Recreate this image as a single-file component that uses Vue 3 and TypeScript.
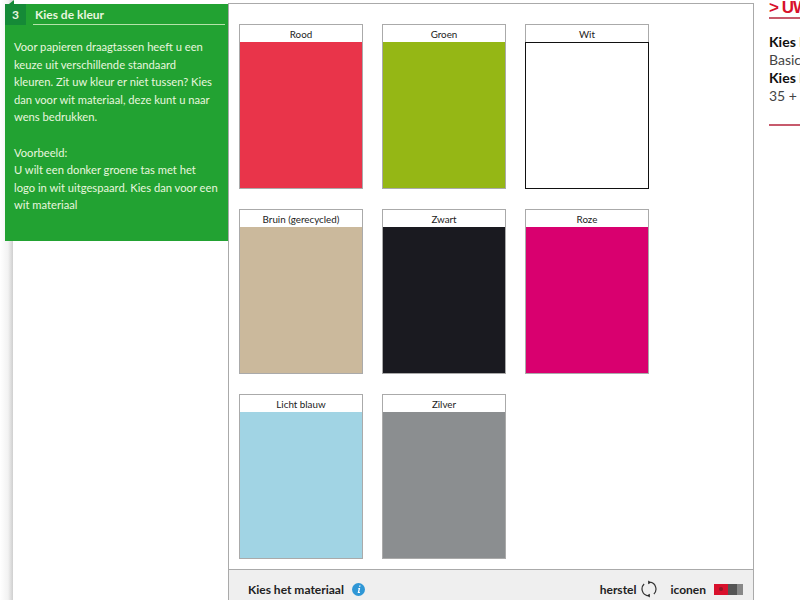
<script setup lang="ts">
interface Swatch {
  name: string
  color: string
}

const swatches: Swatch[] = [
  { name: 'Rood', color: '#e9344a' },
  { name: 'Groen', color: '#95b715' },
  { name: 'Wit', color: '#ffffff' },
  { name: 'Bruin (gerecycled)', color: '#cbb99c' },
  { name: 'Zwart', color: '#1a1a20' },
  { name: 'Roze', color: '#d9006f' },
  { name: 'Licht blauw', color: '#a1d4e4' },
  { name: 'Zilver', color: '#8b8e90' },
]
</script>

<template>
  <div class="page">
    <aside class="left">
      <div class="step">
        <div class="step-head">
          <span class="step-num">3</span>
          <span class="step-title">Kies de kleur</span>
        </div>
        <p class="step-text">
          Voor papieren draagtassen heeft u een<br />
          keuze uit verschillende standaard<br />
          kleuren. Zit uw kleur er niet tussen? Kies<br />
          dan voor wit materiaal, deze kunt u naar<br />
          wens bedrukken.<br />
          <br />
          Voorbeeld:<br />
          U wilt een donker groene tas met het<br />
          logo in wit uitgespaard. Kies dan voor een<br />
          wit materiaal
        </p>
      </div>
    </aside>

    <main class="center">
      <div class="grid">
        <div
          v-for="s in swatches"
          :key="s.name"
          class="card"
          :class="{ white: s.name === 'Wit' }"
        >
          <div class="card-name">{{ s.name }}</div>
          <div class="card-color" :style="{ background: s.color }"></div>
        </div>
      </div>
      <footer class="bar">
        <span class="bar-title">Kies het materiaal</span>
        <svg class="info" width="13" height="13" viewBox="0 0 13 13">
          <circle cx="6.5" cy="6.5" r="6.5" fill="#2f97d6" />
          <path d="M7.3 2.4h1.3l-.3 1.3H7zM6.8 5h1.4l-1 4h.9l-.2.9H5.6l1-4h-.8z" fill="#fff" />
        </svg>
        <span class="bar-right">
          <span class="bar-label">herstel</span>
          <svg class="reset" width="16" height="18" viewBox="0 0 16 18" fill="none" stroke="#333" stroke-width="1.2">
            <path d="M9.4 2.2A7 7 0 0 1 12.9 14" />
            <path d="M6.6 15.8A7 7 0 0 1 3.1 4" />
            <path d="M7.2 0.4l3 2-3 1.9z" fill="#222" stroke="none" />
            <path d="M8.8 17.6l-3-2 3-1.9z" fill="#222" stroke="none" />
          </svg>
          <span class="bar-label icons">iconen</span>
          <span class="toggle">
            <i class="on"><i class="dot"></i></i>
            <i class="off"></i>
            <i class="end"></i>
          </span>
        </span>
      </footer>
    </main>

    <aside class="right">
      <h3 class="right-title">&gt; UW KEUZE</h3>
      <div class="right-body">
        <b>Kies het product</b><br />
        Basic papieren tas<br />
        <b>Kies het formaat</b><br />
        35 + 15 x 45 cm
      </div>
      <div class="right-line"></div>
    </aside>
  </div>
</template>

<style>
html,
body {
  margin: 0;
  overflow: hidden;
  background: #fff;
}
</style>

<style scoped>
.page {
  display: flex;
  width: 800px;
  height: 600px;
  overflow: hidden;
  font-family: Lato, sans-serif;
  color: #222;
}

.left {
  position: relative;
  flex: none;
  width: 228px;
  padding-top: 4px;
  box-sizing: border-box;
  background: linear-gradient(to right, #fff, #f2f2f2 8px, #cfcfcf 13px, #fff 13.5px);
}

/* small fold above the step number */
.left::before {
  content: "";
  position: absolute;
  left: 9px;
  top: 0;
  border-right: 5px solid #158a37;
  border-top: 4px solid transparent;
}

.step {
  position: relative;
  margin-left: 5px;
  height: 237px;
  background: #22a232;
  color: #e8f6df;
}

.step-head {
  display: flex;
  height: 21px;
}

.step-num {
  width: 21px;
  background: #158a37;
  font-size: 12px;
  font-weight: 700;
  line-height: 21px;
  text-align: center;
}

.step-title {
  flex: 1;
  margin: 0 3px 0 7px;
  padding-left: 2px;
  border-bottom: 1px solid #b5e3a9;
  font-size: 12px;
  font-weight: 700;
  line-height: 21px;
}

.step-text {
  margin: 13px 0 0 9px;
  font-size: 11.2px;
  line-height: 17.6px;
  white-space: nowrap;
}

.center {
  flex: none;
  display: flex;
  flex-direction: column;
  width: 526px;
  height: 597px;
  box-sizing: border-box;
  border: 1px solid #aaa;
  border-bottom: 0;
  margin-top: 3px;
}

.grid {
  flex: 1;
  display: grid;
  grid-template-columns: repeat(3, 124px);
  grid-auto-rows: 165px;
  column-gap: 19px;
  row-gap: 20px;
  padding: 20px 0 0 10px;
}

.card {
  display: flex;
  flex-direction: column;
  box-sizing: border-box;
  border: 1px solid #aaa;
}

.card-name {
  flex: none;
  height: 17px;
  font-size: 9.8px;
  line-height: 18px;
  text-align: center;
  color: #222;
}

.card-color {
  flex: 1;
}

.card.white .card-color {
  border: 1px solid #111;
  margin: 0 -1px -1px;
}

.bar {
  flex: none;
  display: flex;
  align-items: center;
  box-sizing: border-box;
  height: 31px;
  padding: 8px 10px 0 19px;
  border-top: 1px solid #aaa;
  background: #efefef;
  font-size: 12px;
  font-weight: 700;
}

.bar-title {
  margin-right: 8px;
}

.bar-right {
  margin-left: auto;
  display: flex;
  align-items: center;
}

.reset {
  margin-left: 5px;
}

.icons {
  margin-left: 13px;
}

.toggle {
  display: flex;
  width: 29px;
  height: 11px;
  margin-left: 8px;
}

.toggle .on {
  display: flex;
  align-items: center;
  justify-content: center;
  width: 14px;
  background: #d8112c;
}

.toggle .dot {
  width: 4px;
  height: 4px;
  border-radius: 50%;
  background: #8c1a28;
}

.toggle .off {
  flex: 1;
  background: #555;
}

.toggle .end {
  width: 6px;
  background: #888;
}

.right {
  flex: none;
  width: 31px;
  margin-left: 15px;
  white-space: nowrap;
  overflow: hidden;
}

.right-title {
  margin: 0;
  padding-bottom: 2px;
  border-bottom: 2px solid #c75a6c;
  color: #d8112c;
  font-family: "Liberation Sans", sans-serif;
  font-size: 17px;
  font-weight: 700;
  line-height: 15px;
  letter-spacing: -1px;
}

.right-body {
  margin-top: 14px;
  font-size: 14px;
  line-height: 18px;
  color: #444;
}

.right-body b {
  color: #111;
}

.right-line {
  margin-top: 19px;
  border-top: 2px solid #c75a6c;
}
</style>
